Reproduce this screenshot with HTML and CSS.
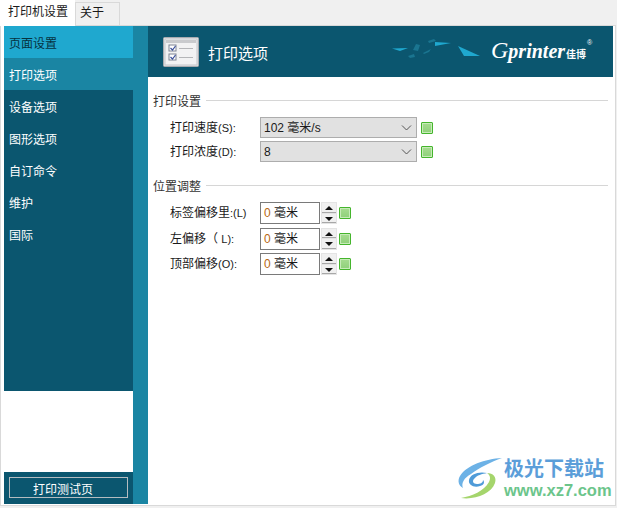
FILE: index.html
```html
<!DOCTYPE html>
<html lang="zh">
<head>
<meta charset="utf-8">
<title>打印机设置</title>
<link rel="stylesheet" href="styles.css">
</head>
<body>
<div class="tabs">
  <div class="tab tab-active">打印机设置</div>
  <div class="tab">关于</div>
</div>
<div class="panel">
  <aside class="side">
    <nav class="nav">
      <div class="nav-item nav-hover">页面设置</div>
      <div class="nav-item nav-selected">打印选项</div>
      <div class="nav-item">设备选项</div>
      <div class="nav-item">图形选项</div>
      <div class="nav-item">自订命令</div>
      <div class="nav-item">维护</div>
      <div class="nav-item">国际</div>
    </nav>
    <div class="test-wrap"><div class="test-btn">打印测试页</div></div>
  </aside>
  <main class="main">
    <header class="banner">
      <svg class="banner-icon" width="36" height="30" viewBox="0 0 36 30">
        <rect x="0.5" y="0.5" width="35" height="29" rx="1" fill="#e4e4e6" stroke="#a9abb0"/>
        <rect x="2" y="2" width="32" height="26" fill="#f2f2f3" stroke="#c6c7cb"/>
        <rect x="3" y="3" width="30" height="3" fill="#c9cacd"/>
        <rect x="6" y="8" width="7" height="6" fill="#fff" stroke="#7e8494"/>
        <rect x="6" y="17" width="7" height="6" fill="#fff" stroke="#7e8494"/>
        <path d="M7.5 11l2 2 3-4M7.5 20l2 2 3-4" fill="none" stroke="#3b4f9b" stroke-width="1.2"/>
        <path d="M16 11.500h14M16 20.500h14" stroke="#b4b5b8"/>
      </svg>
      <h1 class="banner-title">打印选项</h1>
      <svg class="banner-art" width="90" height="26" viewBox="0 0 90 26">
        <path d="M0 11.500l16-.5-8 3z" fill="#1fa8cf"/>
        <path d="M43 9l16-3-16-1z" fill="#1fa8cf"/>
        <path d="M66 9l22 10-16 0z" fill="#1fa8cf"/>
        <path d="M21 13l3-6 4 1-2 6zM31 16l8-4-2 3-5 2zM36 4l6-2 2 2-7 2zM16 19l6-2 1 3-5 1z" fill="#1a7590"/>
      </svg>
      <div class="brand"><span class="brand-name"><span class="brand-g">G</span>printer</span><span class="brand-cn">佳博</span><sup class="brand-reg">®</sup></div>
    </header>
    <section class="content">
      <div class="group-title"><span class="group-text">打印设置</span><i class="rule"></i></div>
      <div class="rows rows-select">
        <div class="row">
          <label class="lbl">打印速度<span class="lat">(S):</span></label>
          <div class="select"><span>102 毫米/s</span><svg class="chev" width="11" height="6" viewBox="0 0 11 6"><path d="M1 .5l4.500 4.500 4.500-4.500" fill="none" stroke="#555"/></svg></div>
          <i class="chk"></i>
        </div>
        <div class="row">
          <label class="lbl">打印浓度<span class="lat">(D):</span></label>
          <div class="select"><span>8</span><svg class="chev" width="11" height="6" viewBox="0 0 11 6"><path d="M1 .5l4.500 4.500 4.500-4.500" fill="none" stroke="#555"/></svg></div>
          <i class="chk"></i>
        </div>
      </div>
      <div class="group-title group-second"><span class="group-text">位置调整</span><i class="rule"></i></div>
      <div class="rows rows-spin">
        <div class="row">
          <label class="lbl">标签偏移里<span class="lat">:(L)</span></label>
          <div class="input"><b class="zero">0</b> 毫米</div>
          <div class="spin"><i class="up"></i><i class="down"></i></div>
          <i class="chk chk-spin"></i>
        </div>
        <div class="row">
          <label class="lbl">左偏移（ <span class="lat">L):</span></label>
          <div class="input"><b class="zero">0</b> 毫米</div>
          <div class="spin"><i class="up"></i><i class="down"></i></div>
          <i class="chk chk-spin"></i>
        </div>
        <div class="row">
          <label class="lbl">顶部偏移<span class="lat">(O):</span></label>
          <div class="input"><b class="zero">0</b> 毫米</div>
          <div class="spin"><i class="up"></i><i class="down"></i></div>
          <i class="chk chk-spin"></i>
        </div>
      </div>
    </section>
  </main>
</div>
<div class="mark">
  <svg class="mark-logo" width="46" height="46" viewBox="0 0 46 46">
    <path d="M45 2C28 3 10 9 3 20c-3 5-1 10 3 12-2-5 1-10 8-14C22 12 34 6 45 2z" fill="#6db2e6"/>
    <path d="M4 42c14 2 30-4 34-15 2-6-2-10-8-10 3 2 4 5 2 9-5 9-17 14-28 16z" fill="#a5d56c"/>
    <path d="M30 17c-8-2-17 1-18 7-1 5 5 8 11 6 4-1 5-4 3-6 0 3-3 4-6 4-4 0-5-3-3-5 3-4 8-5 13-6z" fill="#4f9bd8"/>
  </svg>
  <div class="mark-text">
    <div class="mark-cn">极光下载站</div>
    <div class="mark-url">www.xz7.com</div>
  </div>
</div>
</body>
</html>
```
FILE: styles.css
```css
* { box-sizing: border-box; }
html, body { margin: 0; padding: 0; }
body {
  width: 617px;
  height: 508px;
  background: #f0f0f0;
  font-family: "Liberation Sans", "Noto Sans CJK SC", sans-serif;
  font-size: 12px;
  color: #1a1a1a;
  overflow: hidden;
  position: relative;
}
.tabs { display: flex; height: 25px; align-items: flex-start; }
.tab { line-height: 20px; }
.tab-active {
  width: 75px;
  height: 26px;
  background: #fff;
  padding: 2px 0 0 8px;
  position: relative;
  z-index: 1;
}
.tab:not(.tab-active) {
  width: 45px;
  height: 23px;
  margin-top: 2px;
  padding-left: 4px;
  border: 1px solid #d9d9d9;
  border-bottom: 0;
  background: #f0f0f0;
}
.panel {
  width: 616px;
  height: 481px;
  background: #fff;
  border: 1px solid #d9d9d9;
  padding: 0 2px 1px 3px;
  display: flex;
}
.side {
  width: 144px;
  height: 478px;
  padding-right: 15px;
  background: linear-gradient(#1a85a3, #1a85a3) right / 15px 100% no-repeat, #fff;
  display: flex;
  flex-direction: column;
  justify-content: space-between;
}
.nav { height: 365px; background: #0b566f; }
.nav-item {
  height: 32px;
  line-height: 36px;
  padding-left: 5px;
  color: #fff;
}
.nav-hover { background: #1fa8cf; color: #06323f; }
.nav-selected { background: #1a85a3; }
.test-wrap {
  height: 32px;
  background: #0b566f;
  padding: 5px 5px 6px;
}
.test-btn {
  height: 21px;
  line-height: 24px;
  padding-right: 11px;
  text-align: center;
  color: #fff;
  border: 1px solid #b5bcc0;
}
.main { flex: 1; min-width: 0; }
.banner {
  height: 51px;
  background: #0b566f;
  display: flex;
  align-items: flex-start;
  position: relative;
}
.banner-icon { margin: 11px 0 0 15px; flex: none; }
.banner-title {
  margin: 17px 0 0 9px;
  font-size: 15px;
  font-weight: 400;
  line-height: 22px;
  color: #fff;
}
.banner-art { margin: 11px 0 0 124px; flex: none; }
.brand {
  margin: 12px 0 0 9px;
  color: #fff;
  display: flex;
  align-items: baseline;
  white-space: nowrap;
}
.brand-name {
  font-family: "Liberation Serif", serif;
  font-style: italic;
  font-weight: 700;
  font-size: 20px;
  line-height: 26px;
}
.brand-g { font-size: 24px; font-weight: 400; line-height: 20px; }
.brand-cn { font-size: 10px; font-weight: 700; margin-left: 1px; }
.brand-reg { font-size: 7px; align-self: flex-start; margin: 0 0 0 1px; line-height: 10px; }
.content { padding: 14px 5px 0 5px; }
.group-title {
  display: flex;
  align-items: center;
  gap: 5px;
  height: 20px;
  line-height: 20px;
  color: #333;
}
.group-text { padding-top: 2px; }
.group-second { margin-top: 14px; }
.rule { flex: 1; height: 1px; background: #d6d6d6; margin-top: -2px; }
.rows { padding-left: 17px; display: flex; flex-direction: column; }
.rows-select { margin-top: 6px; gap: 3px; }
.rows-spin { margin-top: 6px; gap: 3.500px; }
.row { display: flex; align-items: center; height: 21px; }
.rows-spin .row { height: 22px; }
.lbl { width: 90px; flex: none; color: #1a1a1a; white-space: nowrap; padding-bottom: 2px; }
.rows-spin .lbl { padding-bottom: 3px; }
.lat { font-size: 11px; }
.select {
  width: 157px;
  height: 21px;
  background: #e1e1e1;
  border: 1px solid #adadad;
  padding: 1px 4px 0 3px;
  display: flex;
  align-items: center;
  justify-content: space-between;
  line-height: 19px;
}
.chev { flex: none; }
.chk {
  display: block;
  width: 12px;
  height: 12px;
  margin-left: 4px;
  border: 1px solid #45b52d;
  border-radius: 1px;
  background: linear-gradient(#a6dc90, #8fd07a);
  box-shadow: inset 0 0 0 1px #c7ebb9;
  flex: none;
}
.chk-spin { margin-left: 2px; }
.input {
  width: 60px;
  height: 22px;
  background: #fff;
  border: 1px solid #7a7a7a;
  padding-left: 3px;
  line-height: 20px;
}
.zero { font-weight: 400; color: #b8680f; }
.spin {
  width: 16px;
  height: 22px;
  margin-left: 1px;
  display: flex;
  flex-direction: column;
  flex: none;
  background: #e4e4e4;
  padding: 1px;
  gap: 1px;
}
.spin i {
  flex: 1;
  background: #f0f0f0;
  border-bottom: 1px solid #a8a8a8;
  position: relative;
}
.spin i::after {
  content: "";
  position: absolute;
  left: 3px;
  top: 3px;
  border-left: 4px solid transparent;
  border-right: 4px solid transparent;
}
.spin .up::after { border-bottom: 4px solid #111; }
.spin .down::after { border-top: 4px solid #111; }
.mark {
  position: absolute;
  left: 457px;
  top: 456px;
  display: flex;
  align-items: flex-start;
}
.mark-logo { flex: none; }
.mark-text { margin: 1px 0 0 1px; }
.mark-cn {
  font-size: 20px;
  font-weight: 700;
  line-height: 24px;
  color: #5b9ed9;
  white-space: nowrap;
}
.mark-url {
  font-size: 16.500px;
  font-weight: 700;
  line-height: 18px;
  color: #6cc58b;
  white-space: nowrap;
}
```
